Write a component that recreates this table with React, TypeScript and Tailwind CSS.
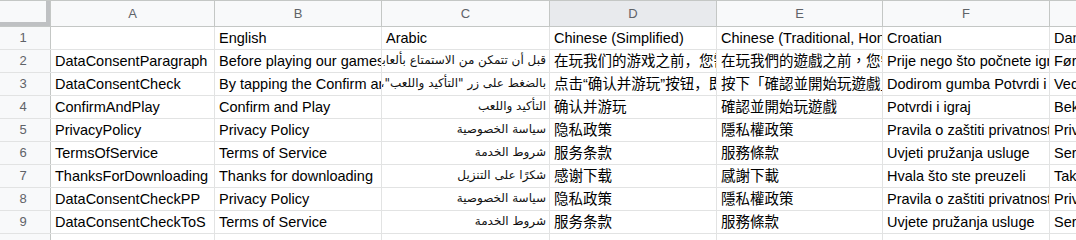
import React from "react";

const cols = [
  { key: "A", w: "w-[164px]" },
  { key: "B", w: "w-[167px]" },
  { key: "C", w: "w-[168px]" },
  { key: "D", w: "w-[167px]" },
  { key: "E", w: "w-[166px]" },
  { key: "F", w: "w-[167px]" },
  { key: "G", w: "w-[120px]" },
];

const rows: string[][] = [
  ["", "English", "Arabic", "Chinese (Simplified)", "Chinese (Traditional, Hong Kong)", "Croatian", "Danish"],
  [
    "DataConsentParagraph",
    "Before playing our games, we need your consent",
    "قبل أن تتمكن من الاستمتاع بألعابنا، نحتاج إلى موافقتك",
    "在玩我们的游戏之前，您需要同意",
    "在玩我們的遊戲之前，您需要同意",
    "Prije nego što počnete igrati",
    "Før du spiller vores spil",
  ],
  [
    "DataConsentCheck",
    "By tapping the Confirm and Play button",
    "بالضغط على زر \"التأكيد واللعب\"، فإنك توافق",
    "点击“确认并游玩”按钮，即表示",
    "按下「確認並開始玩遊戲」按鈕",
    "Dodirom gumba Potvrdi i igraj",
    "Ved at trykke på knappen",
  ],
  ["ConfirmAndPlay", "Confirm and Play", "التأكيد واللعب", "确认并游玩", "確認並開始玩遊戲", "Potvrdi i igraj", "Bekræft og spil"],
  ["PrivacyPolicy", "Privacy Policy", "سياسة الخصوصية", "隐私政策", "隱私權政策", "Pravila o zaštiti privatnosti", "Privatlivspolitik"],
  ["TermsOfService", "Terms of Service", "شروط الخدمة", "服务条款", "服務條款", "Uvjeti pružanja usluge", "Servicevilkår"],
  ["ThanksForDownloading", "Thanks for downloading", "شكرًا على التنزيل", "感谢下载", "感謝下載", "Hvala što ste preuzeli", "Tak fordi du downloadede"],
  ["DataConsentCheckPP", "Privacy Policy", "سياسة الخصوصية", "隐私政策", "隱私權政策", "Pravila o zaštiti privatnosti", "Privatlivspolitik"],
  ["DataConsentCheckToS", "Terms of Service", "شروط الخدمة", "服务条款", "服務條款", "Uvjete pružanja usluge", "Servicevilkår"],
  ["", "", "", "", "", "", ""],
];

const latin = "[font-family:'Liberation_Sans',Arial,sans-serif]";

function CellView({ text, col, rowIdx }: { text: string; col: number; rowIdx: number }) {
  const isAr = col === 2 && rowIdx > 0;
  const isSc = col === 3 && rowIdx > 0;
  const isTc = col === 4 && rowIdx > 0;
  const w = cols[col].w;
  const border = col === 6 ? "" : "border-r border-[#e2e3e3]";
  if (isAr) {
    return (
      <div className={`${w} ${border} shrink-0 h-full overflow-hidden flex items-end justify-end pr-[3px] pb-[3px]`}>
        <span
          dir="rtl"
          className="whitespace-nowrap text-[12px] leading-[17px] text-[#111] [font-family:'DejaVu_Sans',sans-serif]"
        >
          {text}
        </span>
      </div>
    );
  }
  const font = isSc
    ? "[font-family:'Liberation_Sans','Noto_Sans_CJK_SC',sans-serif] text-[14.5px]"
    : isTc
    ? "[font-family:'Liberation_Sans','Noto_Sans_CJK_TC',sans-serif] text-[14.5px]"
    : `${latin} text-[14.5px]`;
  return (
    <div className={`${w} ${border} shrink-0 h-full overflow-hidden flex items-end pl-[4px] pb-[2px]`}>
      <span className={`whitespace-nowrap leading-[18px] text-black ${font}`}>{text}</span>
    </div>
  );
}

export default function App() {
  return (
    <div className={`w-[1076px] h-[240px] overflow-hidden bg-white ${latin}`}>
      <div className="flex h-[27px] border-t border-[#c4c7c5] border-b border-b-[#c4c7c5] bg-[#f8f9fa]">
        <div className="w-[51px] shrink-0 h-full border-r border-[#c4c7c5] bg-[#f8f9fa]">
          <div className="w-[50px] h-[25px] border-r-4 border-b-4 border-[#bfc1c3]" />
        </div>
        {cols.map((c, i) => (
          <div
            key={c.key}
            className={`${c.w} shrink-0 h-full flex items-center justify-center text-[13px] text-[#5f6368] ${
              i === 6 ? "" : "border-r border-[#c4c7c5]"
            } ${c.key === "D" ? "bg-[#e8eaed]" : ""}`}
          >
            {c.key}
          </div>
        ))}
      </div>
      {rows.map((r, ri) => (
        <div key={ri} className="flex h-[23px] border-b border-[#e2e3e3]">
          <div className="w-[51px] shrink-0 h-full bg-[#f8f9fa] border-r border-[#c4c7c5] flex items-center justify-center pr-[4px] text-[13px] text-[#5f6368]">
            {ri + 1}
          </div>
          {r.map((t, ci) => (
            <CellView key={ci} text={t} col={ci} rowIdx={ri} />
          ))}
        </div>
      ))}
    </div>
  );
}
